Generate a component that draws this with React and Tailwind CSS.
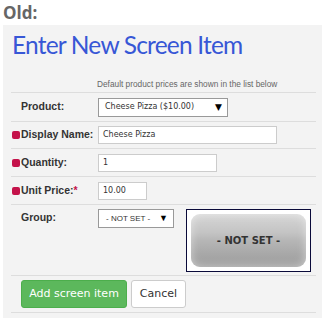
import React from 'react'

const Bullet = () => (
  <span className='inline-block w-[8px] h-[8px] rounded-[2px] bg-[#c4124a] mr-[1px]'></span>
)

const Arrow = () => (
  <span className='text-[9px] text-black leading-none'>▼</span>
)

const Row = ({ label, bullet, star, className, children }) => (
  <div className={`flex border-b border-[#dddddd] ${className}`}>
    <div className='w-[87px] shrink-0 flex items-center pl-[1px] text-[10.5px] font-bold text-[#333]'>
      {bullet ? <Bullet /> : <span className='inline-block w-[9px]'></span>}
      <span>{label}</span>
      {star && <span className='text-[#c4124a]'>*</span>}
    </div>
    {children}
  </div>
)

const App = () => {
  return (
    <div className='w-[322px] h-[322px] bg-white overflow-hidden' style={{ fontFamily: '"Liberation Sans", Arial, sans-serif' }}>
      <div className='pl-[3px] pt-[2px] h-[25px] text-[17px] font-bold text-[#666] font-["Open_Sans",sans-serif] leading-[22px]'>Old:</div>

      <div className='ml-[3px] w-[330px] h-[293px] bg-[#f3f3f3] pl-[8px] pt-[3px]'>
        <h1 className='pl-[1px] h-[37px] text-[24.5px] leading-[34px] text-[#3757d6] font-["Lato",sans-serif] tracking-[-0.8px]'>Enter New Screen Item</h1>

        <div className='w-[305px]'>
          <div className='h-[28px] pl-[86px] pt-[14px] border-b border-[#dddddd] text-[8.3px] text-[#666] leading-[11px]'>
            Default product prices are shown in the list below
          </div>

          <Row label='Product:' className='h-[29px]'>
            <div className='flex items-center'>
              <div className='w-[130px] h-[19px] border border-[#999] bg-white flex items-center justify-between pl-[6px] pr-[5px] text-[8px] text-[#333] font-["DejaVu_Sans",Verdana,sans-serif]'>
                <span>Cheese Pizza ($10.00)</span>
                <Arrow />
              </div>
            </div>
          </Row>

          <Row label='Display Name:' bullet className='h-[27px]'>
            <div className='flex items-center'>
              <div className='w-[179px] h-[18px] border border-[#ccc] bg-white flex items-center pl-[4px] text-[8px] text-[#333] font-["DejaVu_Sans",Verdana,sans-serif]'>Cheese Pizza</div>
            </div>
          </Row>

          <Row label='Quantity:' bullet className='h-[28px]'>
            <div className='flex items-center'>
              <div className='w-[119px] h-[18px] border border-[#ccc] bg-white flex items-center pl-[4px] text-[8px] text-[#333] font-["DejaVu_Sans",Verdana,sans-serif]'>1</div>
            </div>
          </Row>

          <Row label='Unit Price:' bullet star className='h-[28px]'>
            <div className='flex items-center'>
              <div className='w-[49px] h-[18px] border border-[#ccc] bg-white flex items-center pl-[4px] text-[8px] text-[#333] font-["DejaVu_Sans",Verdana,sans-serif]'>10.00</div>
            </div>
          </Row>

          <div className='flex h-[71px] border-b border-[#dddddd] pt-[3px]'>
            <div className='w-[87px] shrink-0 pl-[10px] pt-[3px] text-[10.5px] font-bold text-[#333] leading-[13px]'>Group:</div>
            <div className='w-[76px] h-[19px] mt-[1px] border border-[#999] bg-white flex items-center justify-between pl-[7px] pr-[5px] text-[8px] text-[#333] font-["Liberation_Sans",Arial,sans-serif]'>
              <span>- NOT SET -</span>
              <Arrow />
            </div>
            <div className='ml-[12px] mt-[1px] w-[125px] h-[63px] border-[1.5px] border-[#0a0a3a] bg-white p-[4px]'>
              <div className='h-full rounded-[9px] flex items-center justify-center text-[10px] font-bold text-[#333] font-["DejaVu_Sans",Verdana,sans-serif] bg-[linear-gradient(180deg,#d6d6d6_0%,#c4c4c4_35%,#b6b6b6_50%,#a8a8a8_75%,#9c9c9c_100%)] shadow-[inset_0_0_10px_rgba(255,255,255,0.5)]'>
                - NOT SET -
              </div>
            </div>
          </div>

          <div className='flex items-center h-[37px] border-b border-[#dddddd] pl-[10px] gap-[4px]'>
            <button className='h-[28px] w-[106px] rounded-[3px] bg-[#5cb85c] border border-[#4cae4c] text-white text-[11px] font-["DejaVu_Sans",Verdana,sans-serif]'>Add screen item</button>
            <button className='h-[28px] w-[55px] rounded-[3px] bg-white border border-[#ccc] text-[#333] text-[11px] font-["DejaVu_Sans",Verdana,sans-serif]'>Cancel</button>
          </div>
        </div>
      </div>
    </div>
  )
}

export default App
